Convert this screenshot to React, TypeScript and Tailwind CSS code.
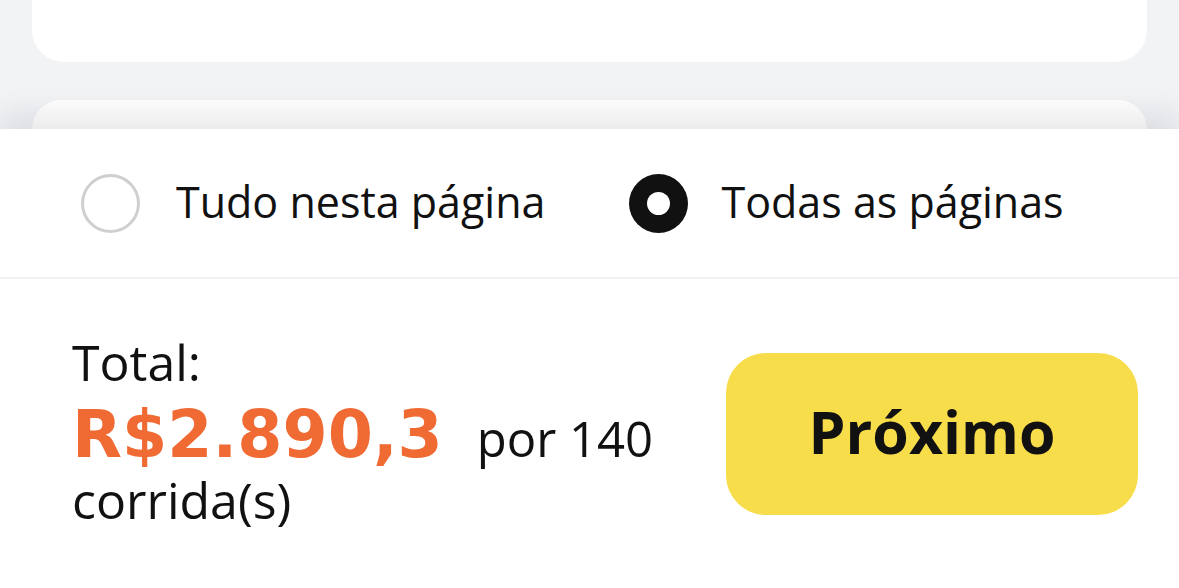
import { useState } from 'react';

const font = { fontFamily: '"Open Sans", "Noto Sans", sans-serif' };

const Radio = ({ checked }: { checked: boolean }) =>
  checked ? (
    <span className="flex h-[59px] w-[59px] shrink-0 items-center justify-center rounded-full bg-[#111111]">
      <span className="h-[23px] w-[23px] rounded-full bg-white" />
    </span>
  ) : (
    <span className="h-[59px] w-[59px] shrink-0 rounded-full border-[3px] border-[#cfcfd1] bg-white" />
  );

export default function App() {
  const [scope, setScope] = useState<'page' | 'all'>('all');

  return (
    <div
      className="relative flex h-[588px] w-[1179px] flex-col overflow-hidden bg-[#f2f3f5] text-[#111111]"
      style={font}
    >
      {/* list behind the sheet */}
      <div className="flex h-[129px] shrink-0 flex-col gap-[38px] px-[32px]">
        <div className="-mt-[40px] h-[102px] shrink-0 rounded-[32px] bg-white" />
        <div className="flex-1 rounded-t-[32px] bg-white" />
      </div>

      {/* bottom sheet */}
      <div className="relative flex flex-1 flex-col bg-white shadow-[0_-14px_30px_rgba(20,20,40,0.10)]">
        <div className="flex h-[150px] items-center border-b-2 border-[#f2f2f4] pl-[81px]">
          <button
            className="flex items-center gap-[36px]"
            onClick={() => setScope('page')}
          >
            <Radio checked={scope === 'page'} />
            <span className="-mt-[4px] text-[43px] leading-none">Tudo nesta página</span>
          </button>
          <button
            className="ml-[84px] flex items-center gap-[33px]"
            onClick={() => setScope('all')}
          >
            <Radio checked={scope === 'all'} />
            <span className="-mt-[4px] text-[43px] leading-none">Todas as páginas</span>
          </button>
        </div>

        <div className="flex flex-1 items-center justify-between pl-[72px] pr-[41px]">
          <div className="-mt-[6px] flex flex-col">
            <span className="text-[50px] leading-[56px]">Total:</span>
            <div className="flex items-baseline gap-[34px]">
              <span
                className="text-[65px] font-bold leading-[90px] text-[#f06a34]"
                style={{ fontFamily: '"DejaVu Sans", sans-serif' }}
              >
                R$2.890,3
              </span>
              <span className="text-[49px]">por 140</span>
            </div>
            <span className="-mt-[8px] text-[50px] leading-[56px]">corrida(s)</span>
          </div>
          <button className="flex h-[162px] w-[412px] items-center justify-center rounded-[40px] bg-[#f8dd4a] pb-[4px] text-[59px] font-bold">
            Próximo
          </button>
        </div>
      </div>
    </div>
  );
}
